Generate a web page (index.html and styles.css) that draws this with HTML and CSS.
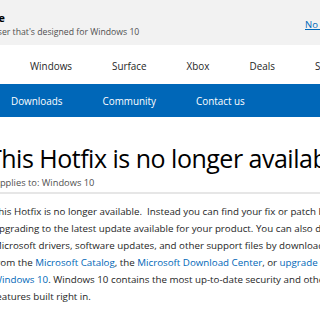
FILE: index.html
```html
<!DOCTYPE html>
<html lang="en">
<head>
  <meta charset="UTF-8">
  <link rel="stylesheet" href="styles.css">
</head>
<body>
<div class="banner">
    <div class="banner-text">
        <p class="banner-title">Try Microsoft Edge</p>
        <p class="banner-sub">A fast and secure browser that's designed for Windows 10</p>
    </div>
    <a class="banner-dismiss" href="#">No thanks</a>
</div>

<div class="topnav">
    <a href="#">Windows</a>
    <a href="#">Surface</a>
    <a href="#">Xbox</a>
    <a href="#">Deals</a>
    <a href="#">Support</a>
</div>

<div class="subnav">
    <a href="#">Downloads</a>
    <a href="#">Community</a>
    <a href="#">Contact us</a>
</div>

<div class="article">
    <h1 class="article-title">This Hotfix is no longer available</h1>
    <p class="applies">Applies to: Windows 10</p>
    <div class="article-body">
        <p>This Hotfix is no longer available.&nbsp; Instead you can find your fix or patch by<br>
        upgrading to the latest update available for your product. You can also download<br>
        Microsoft drivers, software updates, and other support files by downloading them<br>
        from the <a href="#">Microsoft Catalog</a>, the <a href="#">Microsoft Download Center</a>, or <a href="#">upgrade to</a><br>
        <a href="#">Windows 10</a>. Windows 10 contains the most up-to-date security and other<br>
        features built right in.</p>
    </div>
</div>
</body>
</html>
```

FILE: styles.css
```css
body {
    margin: 0;
    padding: 0;
    font-family: 'Open Sans', 'Noto Sans', sans-serif;
    color: #000;
    background: #fff;
    overflow: hidden;
    width: 320px;
}
a {
    text-decoration: none;
}
p {
    margin: 0;
}

/* edge banner */
.banner {
    background-color: #f2f2f2;
    height: 45px;
    display: flex;
    align-items: flex-start;
    overflow: hidden;
}
.banner-text {
    margin-left: -95px;
    padding-top: 10px;
    white-space: nowrap;
    flex: none;
}
.banner-title {
    font-size: 10.8px;
    font-weight: 700;
    line-height: 15px;
}
.banner-sub {
    font-size: 8.7px;
    color: #505050;
    line-height: 15px;
}
.banner-dismiss {
    margin-left: auto;
    margin-top: 18px;
    margin-right: -43px;
    flex: none;
    font-size: 9.5px;
    color: #0067b8;
    text-decoration: underline;
    width: 58px;
}

/* main nav */
.topnav {
    display: flex;
    gap: 40px;
    height: 39px;
    align-items: center;
    padding-left: 30px;
    white-space: nowrap;
    padding-top: 3px;
    box-sizing: border-box;
}
.topnav a {
    font-size: 9.9px;
    color: #262626;
}

.subnav {
    background-color: #0067b8;
    height: 33px;
    display: flex;
    align-items: center;
    gap: 40px;
    padding-left: 11px;
    white-space: nowrap;
}
.subnav a {
    color: #fff;
    font-size: 9.9px;
}

/* article */
.article {
    padding-top: 25px;
}
.article-title {
    font-size: 25px;
    letter-spacing: -0.5px;
    font-weight: 400;
    margin: 0 0 0 -12px;
    white-space: nowrap;
    line-height: 32px;
}
.applies {
    font-size: 9.3px;
    color: #505050;
    margin-left: -6px;
    margin-top: 2px;
    line-height: 14px;
    padding-bottom: 2px;
    border-bottom: 2px solid #e6e6e6;
}
.article-body {
    padding-top: 9px;
    margin-left: -7px;
    font-size: 9.75px;
    line-height: 17px;
    color: #1e1e1e;
    white-space: nowrap;
}
.article-body a {
    color: #0067b8;
}
```
